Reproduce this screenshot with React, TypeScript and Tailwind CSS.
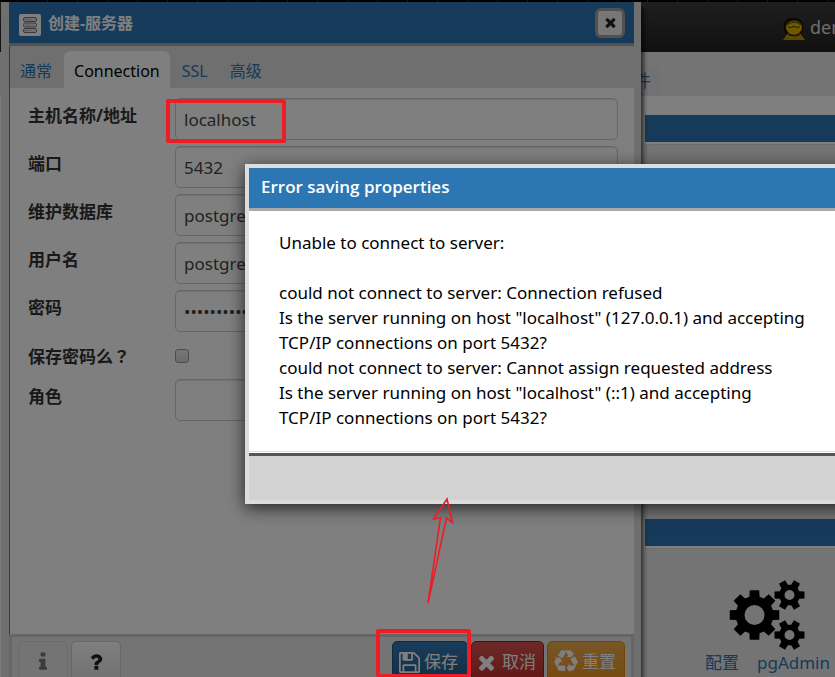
import React from "react";

function FaGlyph({ d, className, box = "0 0 1792 1792" }: { d: string; className: string; box?: string }) {
  return (
    <svg viewBox={box} className={className} fill="currentColor" aria-hidden="true">
      <path d={d} />
    </svg>
  );
}

const FLOPPY =
  "M512 1536h768v-384h-768v384zm896 0h128v-896q0-14-10-38.5t-20-34.5l-281-281q-10-10-34-20t-39-10v416q0 40-28 68t-68 28h-576q-40 0-68-28t-28-68v-416h-128v1280h128v-416q0-40 28-68t68-28h832q40 0 68 28t28 68v416zm-384-928v-320q0-13-9.5-22.5t-22.5-9.5h-192q-13 0-22.5 9.5t-9.5 22.5v320q0 13 9.5 22.5t22.5 9.5h192q13 0 22.5-9.5t9.5-22.5zm640 32v928q0 40-28 68t-68 28h-1344q-40 0-68-28t-28-68v-1344q0-40 28-68t68-28h928q40 0 88 20t76 48l280 280q28 28 48 76t20 88z";
const TIMES =
  "M1490 1322q0 40-28 68l-136 136q-28 28-68 28t-68-28l-294-294-294 294q-28 28-68 28t-68-28l-136-136q-28-28-28-68t28-68l294-294-294-294q-28-28-28-68t28-68l136-136q28-28 68-28t68 28l294 294 294-294q28-28 68-28t68 28l136 136q28 28 28 68t-28 68l-294 294 294 294q28 28 28 68z";
const INFO =
  "M1216 1344v128q0 26-19 45t-45 19h-512q-26 0-45-19t-19-45v-128q0-26 19-45t45-19h64v-384h-64q-26 0-45-19t-19-45v-128q0-26 19-45t45-19h384q26 0 45 19t19 45v576h64q26 0 45 19t19 45zm-128-1152v192q0 26-19 45t-45 19h-256q-26 0-45-19t-19-45v-192q0-26 19-45t45-19h256q26 0 45 19t19 45z";
const QUESTION =
  "M1088 1256v240q0 16-12 28t-28 12h-240q-16 0-28-12t-12-28v-240q0-16 12-28t28-12h240q16 0 28 12t12 28zm316-600q0 54-15.5 101t-35 76.5-55 59.5-57.5 43.5-61 35.5q-41 23-68.5 65t-27.5 67q0 17-12 32.5t-28 15.5h-240q-15 0-25.5-18.5t-10.5-37.5v-45q0-83 65-156.5t143-108.5q59-27 84-56t25-76q0-42-46.5-74t-107.5-32q-65 0-108 29-35 25-107 115-13 16-31 16-12 0-25-8l-164-125q-13-10-15.5-25t5.5-28q160-266 464-266 80 0 161 31t146 83 106 127.5 41 158.5z";
const RECYCLE =
  "M836 1169l-15 368-2 22-420-29q-36-3-67-31.5t-47-65.5q-11-27-14.5-55t4-65 12-55 21.5-64 19-53q78 12 509 28zm-387-586l180 379-147-92q-63 72-111.5 144.5t-72.5 125-39.5 94.5-18.5 63l-4 21-190-357q-17-26-18-56t6-47l8-18q35-63 114-188l-140-86zm1231 517l-188 359q-12 29-36.5 46.5t-43.5 20.5l-18 4q-71 7-219 12l8 164-230-367 211-362 7 173q170 16 283 5t170-33zm-785-924q-47 63-265 435l-317-187-19-12 225-356q20-31 60-45t80-10q24 2 48.5 12t42 21 41.5 33 36 34.5 36 39.5 32 35zm655 307l212 363q18 37 12.5 76t-27.5 74q-13 20-33 37t-38 28-48.5 22-47 16-51.5 14-46 12q-34-72-265-436l313-195zm-143-226l142-83-220 373-419-20 151-86q-34-89-75-166t-75.5-123.5-64.5-80-47-46.5l-17-13 405 1q31-3 58 10.5t39 28.5l11 15q39 61 112 190z";

// Outline of a toothed wheel; the hole is cut out with the even-odd rule.
function gear(cx: number, cy: number, outer: number, root: number, hole: number, teeth: number, base: number, tip: number) {
  const at = (r: number, a: number) => `${(cx + r * Math.cos(a)).toFixed(2)} ${(cy + r * Math.sin(a)).toFixed(2)}`;
  const points: string[] = [];
  for (let i = 0; i < teeth; i++) {
    const a = (i * 2 * Math.PI) / teeth;
    points.push(at(root, a - base), at(outer, a - tip), at(outer, a + tip), at(root, a + base));
  }
  return `M${points.join("L")}Z M${cx + hole} ${cy}a${hole} ${hole} 0 1 0 ${-2 * hole} 0a${hole} ${hole} 0 1 0 ${2 * hole} 0Z`;
}

function Cogs() {
  return (
    <svg viewBox="0 0 76 70" className="h-[70px] w-[76px] text-black" fill="currentColor" fillRule="evenodd" aria-hidden="true">
      <path d={gear(25.5, 35, 25.2, 19, 10, 8, 0.27, 0.19)} />
      <path d={gear(60.5, 15, 15.4, 10.5, 5, 6, 0.36, 0.23)} />
      <path d={gear(60.5, 55, 15.4, 10.5, 5, 6, 0.36, 0.23)} />
    </svg>
  );
}

function Avatar() {
  return (
    <svg viewBox="0 0 24 24" className="mt-1 h-6 w-6 shrink-0" aria-hidden="true">
      <path d="M2 13C0 3 7 0 12 1c6 0 11 4 9 12-1 3-3 5-4 6H6c-2-2-3-3-4-6Z" fill="#171200" />
      <path d="M6 16h12l5 7H1Z" fill="#b89000" />
      <ellipse cx="12" cy="10.5" rx="8" ry="7" fill="#e0b000" />
      <path d="M5 7.500q7-5 14 0" stroke="#6a5204" strokeWidth="1.500" fill="none" />
      <path d="M6 9.500q2.500 2 5 0h2q2.500 2 5 0" stroke="#5b4700" strokeWidth="1.200" fill="none" />
      <path d="M6 17q6 3 12 0" stroke="#3b2d00" strokeWidth="1.500" fill="none" />
    </svg>
  );
}

function ServerIcon() {
  return (
    <svg viewBox="0 0 22 22" className="mt-1 h-[22px] w-[22px] rounded-xs bg-white" fill="#e2e2e6" stroke="#76767e" aria-hidden="true">
      <rect x="4.5" y="3.5" width="13" height="4" rx="1.5" />
      <rect x="4.5" y="9" width="13" height="4" rx="1.5" />
      <rect x="4.5" y="14.5" width="13" height="4" rx="1.5" />
      <path d="M6 5.5h6M6 11h6M6 16.5h6" stroke="#b8b8c0" />
    </svg>
  );
}

function Background() {
  return (
    <div className="flex h-full flex-col bg-[#e8e8e8]">
      <div className="h-[2px] shrink-0 bg-[repeating-linear-gradient(90deg,#000_0_17px,#333_17px_18px,#000_18px_30px)]" />
      <header className="flex h-[50px] shrink-0 items-center bg-linear-to-b from-[#3e3e3e] to-[#222] pl-[782px] text-[18px] text-[#ddd]">
        <Avatar />
        <span className="ml-1 whitespace-nowrap">demo</span>
      </header>
      <nav className="flex h-11 shrink-0 items-end bg-[#e8e8e8] pl-[616px]">
        <a href="#deps" className="h-[30px] w-11 rounded-t bg-[#e5e5e5] pl-[18px] text-[17px] leading-[30px] text-[#2c76b4]">
          件
        </a>
      </nav>
      <main className="flex grow flex-col bg-white pt-[19px] pl-[645px]">
        <section className="h-[385px] shrink-0 bg-[#e8e8e8]">
          <div className="h-[27px] bg-[#2c76b4]" />
          <div className="h-[3px] border-b border-[#ddd] bg-white" />
        </section>
        <div className="h-[19px] shrink-0 bg-[#e8e8e8]" />
        <section className="grow bg-[#e8e8e8]">
          <div className="h-[27px] bg-[#2c76b4]" />
          <div className="h-[3px] border-b border-[#ddd] bg-white" />
          <div className="flex pt-[31px] pl-[60px]">
            <a href="#configure" className="flex shrink-0 flex-col text-[17px] text-[#2c76b4]">
              <span className="pl-6">
                <Cogs />
              </span>
              <span className="leading-[26px] whitespace-nowrap">
                配置<span className="pl-[18px]">pgAdmin</span>
              </span>
            </a>
          </div>
        </section>
      </main>
    </div>
  );
}

const label = "w-[147px] shrink-0 self-start pt-1 text-[17px] leading-7 font-bold text-[#333]";
const field =
  "h-[42px] min-w-0 grow rounded-[5px] border border-[#ccc] bg-white px-2 text-[17px] text-[#444] shadow-[inset_0_1px_1px_rgba(0,0,0,0.1)] outline-none";

function Field({ id, text, value, type = "text" }: { id: string; text: string; value: string; type?: string }) {
  return (
    <div className="flex">
      <label htmlFor={id} className={label}>
        {text}
      </label>
      <input id={id} type={type} defaultValue={value} className={field} />
    </div>
  );
}

const tab = "h-[37px] px-[10px] pt-[2px]";
const button = "flex h-[42px] items-center rounded-[5px] border text-[17px] text-white";

function ServerDialog() {
  return (
    <div
      role="dialog"
      aria-label="创建-服务器"
      className="absolute top-[2px] -bottom-3 left-px flex w-[640px] flex-col border-r-7 border-l-8 border-[#dedede] bg-white shadow-[3px_6px_4px_rgba(0,0,0,0.6)]"
    >
      <header className="flex h-11 shrink-0 items-center border-b-3 border-[#a2a2a2] bg-[#2c76b4] pr-[9px] pl-[10px]">
        <ServerIcon />
        <h1 className="grow pl-[7px] text-[16px] font-bold text-white">创建-服务器</h1>
        <button
          type="button"
          aria-label="关闭"
          className="flex h-[30px] w-[30px] items-center justify-center rounded-md border-3 border-[#a2a2a2] bg-[#eee] text-[#222]"
        >
          <FaGlyph d={TIMES} className="h-[15px] w-[15px]" />
        </button>
      </header>
      <div className="flex min-h-0 grow flex-col border-l border-[#777]">
        <div role="tablist" className="flex h-[42px] shrink-0 items-end gap-[2px] bg-[#dedede] text-[16px] text-[#2c76b4]">
          <button type="button" role="tab" className={tab}>通常</button>
          <button type="button" role="tab" aria-selected="true" className={`${tab} rounded-t-md bg-white text-black`}>
            Connection
          </button>
          <button type="button" role="tab" className={tab}>SSL</button>
          <button type="button" role="tab" className={tab}>高级</button>
        </div>
        <form className="flex grow flex-col gap-[6px] pt-[10px] pr-4 pl-[18px]">
          <Field id="host" text="主机名称/地址" value="localhost" />
          <Field id="port" text="端口" value="5432" />
          <Field id="db" text="维护数据库" value="postgres" />
          <Field id="user" text="用户名" value="postgres" />
          <Field id="password" text="密码" value="passwordpass" type="password" />
          <div className="flex h-[35px] items-center">
            <label htmlFor="save" className={label}>
              保存密码么<span className="font-['Noto_Sans_CJK_TC',sans-serif]">？</span>
            </label>
            <input
              id="save"
              type="checkbox"
              className="h-[14px] w-[14px] appearance-none rounded-[3px] border border-[#999] bg-linear-to-b from-[#eee] to-[#d5d5d5]"
            />
          </div>
          <Field id="role" text="角色" value="" />
        </form>
      </div>
      <footer className="flex h-[55px] shrink-0 gap-[3px] border-3 border-[#ccc] bg-[#e8e8e8] px-[6px] pt-1">
        <button type="button" aria-label="信息" className={`${button} w-[50px] justify-center border-[#d8d8d8] bg-[#e8e8e8]`}>
          <FaGlyph d={INFO} className="h-[22px] w-[22px] text-[#777]" />
        </button>
        <button
          type="button"
          aria-label="帮助"
          className={`${button} w-[50px] justify-center border-[#ccc] bg-linear-to-b from-white to-[#e0e0e0]`}
        >
          <FaGlyph d={QUESTION} className="h-[22px] w-[22px] text-[#222]" />
        </button>
        <div className="grow" />
        <button type="button" className={`${button} w-[76px] gap-1 border-[#245580] bg-linear-to-b from-[#337ab7] to-[#265a88] pl-[6px]`}>
          <FaGlyph d={FLOPPY} box="128 128 1536 1536" className="h-[21px] w-[21px]" />
          保存
        </button>
        <button type="button" className={`${button} w-[73px] gap-1 border-[#8b2522] bg-linear-to-b from-[#d9534f] to-[#c12e2a] pl-[3px]`}>
          <FaGlyph d={TIMES} className="h-[23px] w-[23px]" />
          取消
        </button>
        <button type="button" className={`${button} w-[78px] gap-1 border-[#e38d13] bg-linear-to-b from-[#f0ad4e] to-[#eb9316] pl-[6px]`}>
          <FaGlyph d={RECYCLE} className="h-6 w-6" />
          重置
        </button>
      </footer>
    </div>
  );
}

function ErrorDialog() {
  return (
    <div
      role="alertdialog"
      aria-label="Error saving properties"
      className="absolute top-[164px] -right-16 left-[245px] border-4 border-[#ddd] bg-white shadow-[0_4px_16px_rgba(0,0,0,0.7)]"
    >
      <h2 className="h-[43px] border-b-3 border-[#a9a9a9] bg-[#2c76b4] pl-3 font-['Open_Sans',sans-serif] text-[17px] leading-[38px] font-semibold text-white">
        Error saving properties
      </h2>
      <div className="border-b border-[#ddd] pt-[19px] pr-4 pb-[21px] pl-[30px] text-[17px] leading-[25px] text-black">
        <p className="pb-[25px]">Unable to connect to server:</p>
        <p>could not connect to server: Connection refused</p>
        <p>Is the server running on host "localhost" (127.0.0.1) and accepting</p>
        <p>TCP/IP connections on port 5432?</p>
        <p>could not connect to server: Cannot assign requested address</p>
        <p>Is the server running on host "localhost" (::1) and accepting</p>
        <p>TCP/IP connections on port 5432?</p>
      </div>
      <div className="mt-px h-[47px] border-t-3 border-[#555] bg-[#d2d2d2]" />
    </div>
  );
}

export default function App() {
  return (
    <div className="relative h-screen overflow-hidden font-['Noto_Sans','Noto_Sans_CJK_SC',sans-serif]">
      <Background />
      <ServerDialog />
      <div className="absolute inset-0 bg-black/50" />
      <ErrorDialog />
      <div className="absolute top-[99px] left-[166px] h-11 w-[120px] rounded-xs border-4 border-[#ee1c25]" />
      <div className="absolute top-[629px] left-[376px] h-12 w-[95px] rounded-xs border-4 border-b-3 border-[#ee1c25]" />
      <svg viewBox="0 0 30 110" className="absolute top-[496px] left-[425px] h-[110px] w-[30px]" fill="none" stroke="#ee1c25" strokeWidth="1.6" aria-hidden="true">
        <path d="M3 107L15.5 21.5L8.5 23L22 3L27.5 26.5L21.5 22L3 107Z" />
      </svg>
    </div>
  );
}
